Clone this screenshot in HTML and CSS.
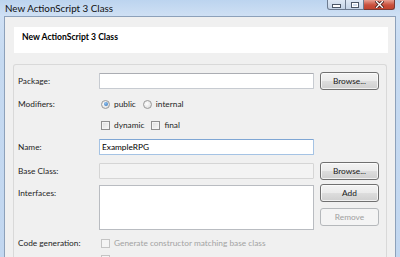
FILE: index.html
```html
<!DOCTYPE html>
<html lang="en">
<head>
    <meta charset="UTF-8">
    <title>New ActionScript 3 Class</title>
    <link rel="stylesheet" href="styles.css">
</head>
<body>
    <div class="window">
        <div class="titlebar">
            <span class="title">New ActionScript 3 Class</span>
            <div class="caption-buttons">
                <span class="cap cap-min"><i class="min-glyph"></i></span>
                <span class="cap cap-max"><i class="max-glyph"></i></span>
                <span class="cap cap-close">
                    <svg width="9" height="7" viewBox="0 0 9 7">
                        <path d="M1.5 0.5 L7.5 6.5 M7.5 0.5 L1.5 6.5" stroke="#3b1414" stroke-width="3" stroke-linecap="square"/>
                        <path d="M1.5 0.5 L7.5 6.5 M7.5 0.5 L1.5 6.5" stroke="#ffffff" stroke-width="1.4" stroke-linecap="square"/>
                    </svg>
                </span>
            </div>
        </div>
        <div class="client">
            <div class="banner">
                <h1>New ActionScript 3 Class</h1>
            </div>
            <div class="group">
                <div class="row row-package">
                    <label>Package:</label>
                    <span class="field"></span>
                    <span class="btn">Browse...</span>
                </div>
                <div class="row row-modifiers">
                    <label>Modifiers:</label>
                    <div class="options">
                        <span class="option"><i class="radio checked"></i>public</span>
                        <span class="option"><i class="radio"></i>internal</span>
                    </div>
                </div>
                <div class="row row-flags">
                    <span></span>
                    <div class="options">
                        <span class="option"><i class="check"></i>dynamic</span>
                        <span class="option"><i class="check"></i>final</span>
                    </div>
                </div>
                <div class="row row-name">
                    <label>Name:</label>
                    <span class="field focused">ExampleRPG</span>
                </div>
                <div class="row row-base">
                    <label>Base Class:</label>
                    <span class="field disabled"></span>
                    <span class="btn">Browse...</span>
                </div>
                <div class="row row-interfaces">
                    <label>Interfaces:</label>
                    <span class="listbox"></span>
                    <div class="btn-stack">
                        <span class="btn">Add</span>
                        <span class="btn disabled">Remove</span>
                    </div>
                </div>
                <div class="row row-codegen">
                    <label>Code generation:</label>
                    <div class="options wide">
                        <span class="option dim"><i class="check disabled"></i>Generate constructor matching base class</span>
                    </div>
                </div>
                <div class="row row-codegen2">
                    <span></span>
                    <div class="options wide">
                        <span class="option dim"><i class="check disabled"></i></span>
                    </div>
                </div>
            </div>
        </div>
    </div>
</body>
</html>
```

FILE: styles.css
```css
body {
    margin: 0;
    font-family: 'Lato', 'Open Sans', sans-serif;
    font-size: 8.3px;
    color: #1e1e1e;
}
.window {
    width: 400px;
    height: 257px;
    overflow: hidden;
    display: flex;
    flex-direction: column;
    padding: 0 4px;
    box-sizing: border-box;
    background: linear-gradient(to bottom, #bcd4ef 0px, #cfe0f4 16px, #c6daf1 60px, #c2d7f0 257px);
}
.titlebar {
    height: 16px;
    display: flex;
    align-items: flex-start;
    justify-content: space-between;
    flex-shrink: 0;
}
.title {
    font-size: 9.8px;
    color: #101010;
    margin: 2px 0 0 1px;
}
.caption-buttons {
    display: flex;
    margin-right: 1px;
}
.cap {
    height: 10px;
    box-sizing: border-box;
    border: 1px solid #6d7b8f;
    border-top: none;
    display: flex;
    align-items: center;
    justify-content: center;
}
.cap-min {
    width: 19px;
    border-radius: 0 0 0 3px;
    background: linear-gradient(to bottom, #dfe9f5, #c4d3e6);
}
.cap-max {
    width: 18px;
    border-left: none;
    background: linear-gradient(to bottom, #dfe9f5, #c4d3e6);
}
.cap-close {
    width: 31px;
    border-left: none;
    border-color: #7a3a34;
    border-radius: 0 0 3px 0;
    background: linear-gradient(to bottom, #e8a193, #c9503d 55%, #c2442f);
}
.min-glyph {
    width: 7px;
    height: 2px;
    margin-top: 3px;
    background: #fff;
    border: 1px solid #4d5868;
}
.max-glyph {
    width: 6px;
    height: 4px;
    border: 1px solid #4d5868;
    box-shadow: inset 0 0 0 1px #fff;
    background: transparent;
}
.client {
    flex: 1;
    background: #f0f0f0;
    border: 1px solid #8da1ba;
    border-bottom: none;
}
.banner {
    margin: 10px 7px 0 9px;
    height: 26px;
    background: #ffffff;
    box-sizing: border-box;
    padding: 4px 8px;
}
.banner h1 {
    margin: 0;
    font-size: 8.6px;
    line-height: 12px;
    font-weight: bold;
    color: #000;
}
.group {
    margin: 11px 8px 0 8px;
    border: 1px solid #d9d9d9;
    border-bottom: none;
    border-radius: 3px 3px 0 0;
    padding: 7px 0 0 4px;
}
.row {
    display: grid;
    grid-template-columns: 75px 215px 59px;
    column-gap: 6px;
    align-items: center;
    height: 18px;
}
.row label {
    white-space: nowrap;
}
.row-modifiers { margin-top: 5px; }
.row-flags { margin-top: 3px; }
.row-name { margin-top: 4px; }
.row-base { margin-top: 6px; }
.row-interfaces {
    margin-top: 4px;
    height: 46px;
    align-items: start;
}
.row-interfaces label {
    padding-top: 4px;
}
.row-codegen {
    margin-top: 5px;
    height: 16px;
}
.row-codegen2 {
    height: 16px;
}
.field {
    height: 16px;
    box-sizing: border-box;
    background: #fff;
    border: 1px solid #c7cbd1;
    border-top-color: #abadb3;
    border-radius: 1px;
    padding: 0 2px;
    line-height: 14px;
    color: #000;
}
.field.focused {
    border-color: #a5c3e4;
    border-top-color: #7fa6d4;
}
.field.disabled {
    background: #f3f3f3;
    border-color: #d5d5d5;
}
.listbox {
    height: 45px;
    margin-top: 1px;
    box-sizing: border-box;
    background: #fff;
    border: 1px solid #b9bcc1;
}
.btn {
    height: 18px;
    box-sizing: border-box;
    border: 1px solid #707070;
    border-radius: 3px;
    background: linear-gradient(to bottom, #f3f3f3 0%, #ebebeb 48%, #dddddd 52%, #cfcfcf 100%);
    box-shadow: inset 0 0 0 1px rgba(255, 255, 255, 0.7);
    display: flex;
    align-items: center;
    justify-content: center;
    color: #1a1a1a;
}
.btn.disabled {
    border-color: #b5b8bb;
    background: #f4f4f4;
    box-shadow: none;
    color: #a0a0a0;
}
.btn-stack {
    display: flex;
    flex-direction: column;
    gap: 6px;
}
.options {
    display: flex;
    align-items: center;
    gap: 7px;
    padding-left: 2px;
}
.options.wide {
    grid-column: 2 / 4;
}
.option {
    display: flex;
    align-items: center;
    gap: 4px;
    white-space: nowrap;
}
.option.dim {
    color: #a3a3a3;
}
.radio {
    width: 9px;
    height: 9px;
    box-sizing: border-box;
    border-radius: 50%;
    border: 1px solid #9a9a9a;
    background: radial-gradient(circle at 40% 40%, #ffffff, #d6d6d6);
    position: relative;
}
.radio.checked::after {
    content: '';
    position: absolute;
    left: 1.5px;
    top: 1.5px;
    width: 4px;
    height: 4px;
    border-radius: 50%;
    background: radial-gradient(circle at 40% 35%, #8fc2ef, #2d6cb5);
}
.check {
    width: 9px;
    height: 9px;
    box-sizing: border-box;
    border: 1px solid #8f8f8f;
    background: linear-gradient(135deg, #dcdcdc, #fafafa);
    box-shadow: inset 0 0 0 1px #f4f4f4;
}
.check.disabled {
    border-color: #c4c4c4;
    background: #f4f4f4;
}
```
